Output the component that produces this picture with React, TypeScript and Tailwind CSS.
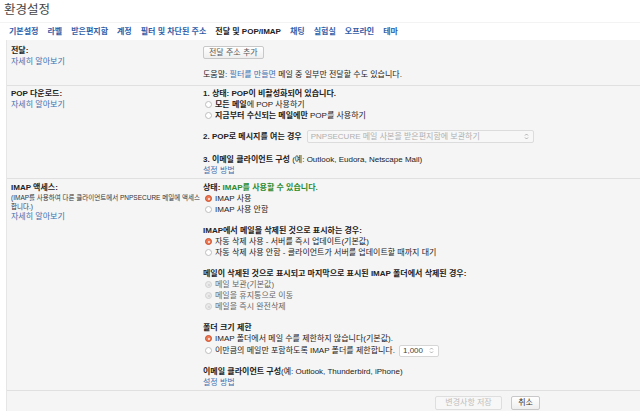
import React from 'react';

const tabs = ['기본설정', '라벨', '받은편지함', '계정', '필터 및 차단된 주소', '전달 및 POP/IMAP', '채팅', '실험실', '오프라인', '테마'];

type RadioState = 'on' | 'off' | 'disabled';

function Radio({ state }: { state: RadioState }) {
    if (state === 'on') {
        return (
            <span className="ml-[2px] mr-[3px] inline-flex w-[7px] h-[7px] shrink-0 rounded-full border border-[#c9502e] bg-[#ee7a55] items-center justify-center">
                <span className="w-[2px] h-[2px] rounded-full bg-[#fff3ee]" />
            </span>
        );
    }
    if (state === 'disabled') {
        return (
            <span className="ml-[2px] mr-[3px] inline-flex w-[7px] h-[7px] shrink-0 rounded-full border border-[#d2d2d2] bg-[#e9e9e9] items-center justify-center">
                <span className="w-[2px] h-[2px] rounded-full bg-[#d0d0d0]" />
            </span>
        );
    }
    return <span className="ml-[2px] mr-[3px] inline-block w-[7px] h-[7px] shrink-0 rounded-full border border-[#bdbdbd] bg-white" />;
}

function Row({ state, children }: { state: RadioState; children: React.ReactNode }) {
    return (
        <div className={`flex items-center h-[11px] ${state === 'disabled' ? 'text-[#666]' : ''}`}>
            <Radio state={state} />
            <span>{children}</span>
        </div>
    );
}

function Arrows() {
    return (
        <svg width="5" height="7" viewBox="0 0 5 7" className="shrink-0">
            <path d="M1 2.5 L2.5 1 L4 2.5" fill="none" stroke="#9a9a9a" strokeWidth="0.8" />
            <path d="M1 4.5 L2.5 6 L4 4.5" fill="none" stroke="#9a9a9a" strokeWidth="0.8" />
        </svg>
    );
}

function Link({ children }: { children: React.ReactNode }) {
    return <span className="text-[#3c6fb0]">{children}</span>;
}

export default function App() {
    return (
        <div className="w-[640px] h-[411px] overflow-hidden bg-white text-[#222] font-['Liberation_Sans','Noto_Sans_CJK_KR',sans-serif]">
            <div className="h-[22px] pl-[4px] pt-[3px] text-[12.5px] leading-[14px] text-[#444]">환경설정</div>

            <div className="h-[18px] flex items-center gap-[9px] pl-[9px] text-[8px] font-bold leading-[10px] border-t border-[#f3f3f3]">
                {tabs.map((t) => (
                    <span key={t} className={t === '전달 및 POP/IMAP' ? 'text-[#222]' : 'text-[#2f5ea8]'}>
                        {t}
                    </span>
                ))}
            </div>

            <div className="ml-[6px] h-[371px] bg-[#f5f5f5] border-l border-[#e6e6e6] text-[8px] leading-[11px]">
                {/* 전달 */}
                <div className="grid grid-cols-[196px_1fr] pt-[5px] pb-[5px] border-b border-[#e0e0e0]">
                    <div className="pl-[4px]">
                        <div className="font-bold">전달:</div>
                        <Link>자세히 알아보기</Link>
                    </div>
                    <div>
                        <button className="mt-[1px] h-[13px] px-[5px] rounded-[2px] border border-[#c8c8c8] bg-gradient-to-b from-white to-[#eeeeee] text-[#555] text-[8px] leading-[11px]">
                            전달 주소 추가
                        </button>
                        <div className="mt-[10px]">
                            도움말: <Link>필터를 만들면</Link> 메일 중 일부만 전달할 수도 있습니다.
                        </div>
                    </div>
                </div>

                {/* POP */}
                <div className="grid grid-cols-[196px_1fr] pt-[2px] pb-[2px] border-b border-[#e0e0e0]">
                    <div className="pl-[4px]">
                        <div className="font-bold">POP 다운로드:</div>
                        <Link>자세히 알아보기</Link>
                    </div>
                    <div>
                        <div className="font-bold">1. 상태: POP이 비활성화되어 있습니다.</div>
                        <Row state="off">
                            <b>모든 메일</b>에 POP 사용하기
                        </Row>
                        <Row state="off">
                            <b>지금부터 수신되는 메일에만</b> POP를 사용하기
                        </Row>
                        <div className="mt-[9px] h-[13px] flex items-center">
                            <span className="font-bold">2. POP로 메시지를 여는 경우</span>
                            <div className="ml-[5px] w-[227px] h-[13px] flex items-center justify-between pl-[3px] pr-[4px] rounded-[2px] border border-[#dcdcdc] bg-[#f7f7f7] text-[#b0b0b0]">
                                <span>PNPSECURE 메일 사본을 받은편지함에 보관하기</span>
                                <Arrows />
                            </div>
                        </div>
                        <div className="mt-[11px]">
                            <b>3. 이메일 클라이언트 구성</b> (예: Outlook, Eudora, Netscape Mail)
                        </div>
                        <Link>설정 방법</Link>
                    </div>
                </div>

                {/* IMAP */}
                <div className="grid grid-cols-[196px_1fr] pt-[3px] pb-[2px] border-b border-[#e0e0e0]">
                    <div className="pl-[4px]">
                        <div className="font-bold">IMAP 액세스:</div>
                        <div className="text-[6.5px] leading-[9px] text-[#333]">
                            (IMAP를 사용하여 다른 클라이언트에서 PNPSECURE 메일에 액세스
                            <br />
                            합니다.)
                        </div>
                        <Link>자세히 알아보기</Link>
                    </div>
                    <div>
                        <div className="font-bold">
                            상태: <span className="text-[#2b8a2b]">IMAP를 사용할 수 있습니다.</span>
                        </div>
                        <Row state="on">IMAP 사용</Row>
                        <Row state="off">IMAP 사용 안함</Row>

                        <div className="mt-[10px] font-bold">IMAP에서 메일을 삭제된 것으로 표시하는 경우:</div>
                        <Row state="on">자동 삭제 사용 - 서버를 즉시 업데이트(기본값)</Row>
                        <Row state="off">자동 삭제 사용 안함 - 클라이언트가 서버를 업데이트할 때까지 대기</Row>

                        <div className="mt-[10px] font-bold">
                            메일이 삭제된 것으로 표시되고 마지막으로 표시된 IMAP 폴더에서 삭제된 경우:
                        </div>
                        <Row state="disabled">메일 보관(기본값)</Row>
                        <Row state="disabled">메일을 휴지통으로 이동</Row>
                        <Row state="disabled">메일을 즉시 완전삭제</Row>

                        <div className="mt-[10px] font-bold">폴더 크기 제한</div>
                        <Row state="on">IMAP 폴더에서 메일 수를 제한하지 않습니다(기본값).</Row>
                        <div className="flex items-center h-[13px]">
                            <Radio state="off" />
                            <span>이만큼의 메일만 포함하도록 IMAP 폴더를 제한합니다.</span>
                            <div className="ml-[4px] w-[40px] h-[12px] flex items-center justify-between pl-[3px] pr-[4px] rounded-[2px] border border-[#d6d6d6] bg-white text-[#444]">
                                <span>1,000</span>
                                <Arrows />
                            </div>
                        </div>

                        <div className="mt-[9px]">
                            <b>이메일 클라이언트 구성</b>(예: Outlook, Thunderbird, iPhone)
                        </div>
                        <Link>설정 방법</Link>
                    </div>
                </div>

                {/* 하단 버튼 */}
                <div className="flex gap-[9px] pl-[428px] pt-[5px]">
                    <button className="h-[14px] w-[67px] rounded-[2px] border border-[#dedede] bg-[#f7f7f7] text-[#bdbdbd] text-[8px] leading-[12px]">
                        변경사항 저장
                    </button>
                    <button className="h-[14px] w-[29px] rounded-[2px] border border-[#c8c8c8] bg-gradient-to-b from-white to-[#eeeeee] text-[#333] text-[8px] leading-[12px]">
                        취소
                    </button>
                </div>
            </div>
        </div>
    );
}
